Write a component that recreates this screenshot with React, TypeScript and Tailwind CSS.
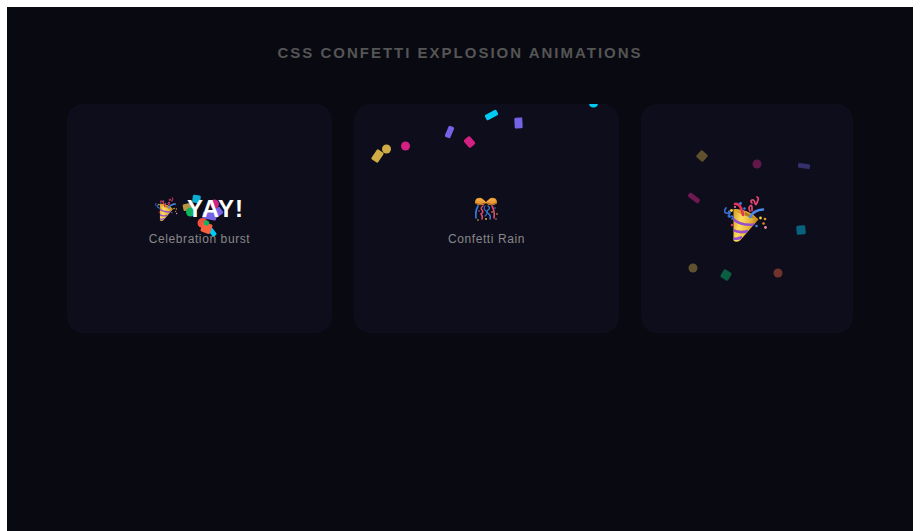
type Piece = {
  x: number;
  y: number;
  w: number;
  h: number;
  rotate?: number;
  round?: boolean;
  color: string;
};

const GOLD = '#d1ab45';
const PINK = '#d42083';
const PURPLE = '#7563e6';
const CYAN = '#00cbf5';
const GREEN = '#12b35f';
const ORANGE = '#fb603c';

// x / y are the centre of every piece, in card units
const burst: Piece[] = [
  { x: 129, y: 95, w: 8, h: 8, rotate: 8, color: '#0bafd4' },
  { x: 120, y: 103, w: 9, h: 7, rotate: -12, color: '#b5963f' },
  { x: 123, y: 108, w: 9, h: 9, round: true, color: GREEN },
  { x: 147, y: 100, w: 9, h: 9, round: true, color: PINK },
  { x: 149, y: 109, w: 12, h: 8, rotate: -35, color: PURPLE },
  { x: 142, y: 112, w: 14, h: 7, rotate: 10, color: PURPLE },
  { x: 144, y: 127, w: 12, h: 5, rotate: 52, color: CYAN },
  { x: 135, y: 119, w: 10, h: 10, round: true, color: '#f0503f' },
  { x: 139, y: 124, w: 10, h: 10, rotate: 20, color: ORANGE },
  { x: 139, y: 119, w: 5, h: 5, rotate: 25, color: GREEN },
];

const rain: Piece[] = [
  { x: 23, y: 52, w: 12, h: 8, rotate: -56, color: GOLD },
  { x: 32, y: 45, w: 9, h: 9, round: true, color: GOLD },
  { x: 51, y: 42, w: 9, h: 9, round: true, color: PINK },
  { x: 95, y: 28, w: 12, h: 6, rotate: -67, color: PURPLE },
  { x: 115, y: 38, w: 10, h: 8, rotate: 49, color: PINK },
  { x: 137, y: 11, w: 13, h: 6, rotate: -28, color: CYAN },
  { x: 164, y: 19, w: 8, h: 11, rotate: -3, color: PURPLE },
  { x: 239, y: -1, w: 9, h: 9, round: true, color: CYAN },
];

const popper: Piece[] = [
  { x: 61, y: 52, w: 9, h: 9, rotate: 42, color: '#5f512d' },
  { x: 116, y: 60, w: 9, h: 9, round: true, color: '#611848' },
  { x: 163, y: 62, w: 12, h: 5, rotate: 8, color: '#35306b' },
  { x: 53, y: 94, w: 13, h: 5, rotate: 38, color: '#6e1950' },
  { x: 160, y: 126, w: 9, h: 9, rotate: -5, color: '#08627f' },
  { x: 52, y: 164, w: 9, h: 9, round: true, color: '#5f512d' },
  { x: 85, y: 171, w: 9, h: 9, rotate: 32, color: '#0a5f43' },
  { x: 137, y: 169, w: 9, h: 9, round: true, color: '#71332c' },
];

function Confetti({ pieces, width }: { pieces: Piece[]; width: number }) {
  return (
    <svg
      aria-hidden="true"
      viewBox={`0 0 ${width} 229`}
      className="absolute inset-0 h-full w-full"
    >
      {pieces.map((p, i) => (
        <rect
          key={i}
          x={p.x - p.w / 2}
          y={p.y - p.h / 2}
          width={p.w}
          height={p.h}
          rx={p.round ? p.w / 2 : 1.5}
          fill={p.color}
          transform={`rotate(${p.rotate ?? 0} ${p.x} ${p.y})`}
        />
      ))}
    </svg>
  );
}

function PartyPopper({ className }: { className: string }) {
  return (
    <svg aria-hidden="true" viewBox="1 0 46 46" className={className}>
      <defs>
        <linearGradient id="cone" x1="0" x2="1" y1="0" y2="0.3">
          <stop offset="0" stopColor="#d99a22" />
          <stop offset="0.35" stopColor="#fbdc60" />
          <stop offset="0.7" stopColor="#eab93c" />
          <stop offset="1" stopColor="#b97c1c" />
        </linearGradient>
        <clipPath id="coneClip">
          <path d="M10.500 13Q24 12 35.500 23.500L17 44.500Q13 47 10.500 44.500Z" />
        </clipPath>
      </defs>
      <path d="M10.500 13Q24 12 35.500 23.500L17 44.500Q13 47 10.500 44.500Z" fill="url(#cone)" />
      <g clipPath="url(#coneClip)" fill="none" stroke="#9650cb" strokeWidth="2.600">
        <path d="M9 22Q17 30 32 28.500" />
        <path d="M9 33Q15 38 25 35" />
        <path d="M9 42Q13 44 19 41" />
      </g>
      <path d="M11 13.500Q18 20 35 23.500Q28 14 11 13.500Z" fill="#dda02b" />
      <path d="M22 16Q28 19 33 22.500Q27 22 22 19Z" fill="#b3761d" />
      <g fill="none" strokeLinecap="round" strokeLinejoin="round">
        <path d="M12 8Q18 7 20 19" stroke="#e33356" strokeWidth="2.600" />
        <path d="M27 21Q31 14 40 13.500" stroke="#4989ec" strokeWidth="2.600" />
        <path d="M27 15Q25 12 27 10T29 12 29 14M29 7Q27 5 29 4T32 7T35 4Q36 2 34 1" stroke="#e44770" strokeWidth="1.700" />
        <path d="M3 12Q0 16 3 17T6 15Q8 16 6 19T9 20Q11 20 9 23" stroke="#386fd2" strokeWidth="1.700" />
      </g>
      <circle cx="17.500" cy="7.500" r="1.400" fill="#397ee8" />
      <circle cx="21.500" cy="12.500" r="1.300" fill="#397ee8" />
      <circle cx="33.500" cy="30" r="1.300" fill="#397ee8" />
      <circle cx="12" cy="11" r="1.100" fill="#f0769e" />
      <circle cx="9" cy="29" r="1.300" fill="#d53653" />
      <circle cx="8.500" cy="14.500" r="1.400" fill="#f6d936" />
      <circle cx="37.500" cy="22" r="1.400" fill="#f9d63e" />
      <circle cx="42" cy="23" r="1.300" fill="#e39c2c" />
      <circle cx="40.500" cy="27.500" r="1.300" fill="#df8a2a" />
      <circle cx="42.500" cy="31.500" r="1.400" fill="#ed86ac" />
    </svg>
  );
}

function ConfettiBall() {
  return (
    <svg aria-hidden="true" viewBox="1 0 24 24" className="h-6 w-6">
      <path d="M12 5C9 2 7 0 5 1 2 1 1 3 1 6 4 9 9 9 12 6Z" fill="#e99a35" />
      <path d="M12 5C15 2 17 0 19 1 22 1 23 3 23 6 20 9 15 9 12 6Z" fill="#e99a35" />
      <path d="M3 3Q8 2 11 5M21 3Q16 2 13 5" fill="none" stroke="#f8b552" strokeWidth="1" />
      <path d="M1 6Q6 9 11 6M23 6Q18 9 13 6" fill="none" stroke="#a45d24" strokeWidth="1" />
      <g fill="none" strokeLinecap="round">
        <path d="M4 9Q1 14 2 21" stroke="#3579e0" strokeWidth="1.700" />
        <path d="M18 9Q21 14 20 21" stroke="#e34d76" strokeWidth="1.600" />
        <path d="M9 9Q6 11 8 13T7 17Q9 19 8 22" stroke="#e04b70" strokeWidth="1.500" />
        <path d="M14 9Q17 11 14 13T15 17Q17 19 16 22" stroke="#3f73c8" strokeWidth="1.500" />
        <path d="M11 9Q9 12 12 14T11 19" stroke="#386ac2" strokeWidth="1.200" />
      </g>
      <circle cx="21" cy="11" r=".8" fill="#4485df" />
      <circle cx="18" cy="15" r=".8" fill="#efbe3c" />
      <circle cx="23" cy="17" r=".8" fill="#efbe3c" />
      <circle cx="5" cy="14" r=".8" fill="#e05076" />
      <circle cx="12" cy="22" r=".9" fill="#efbe3c" />
      <circle cx="4" cy="23" r=".8" fill="#efbe3c" />
      <circle cx="22" cy="22" r=".8" fill="#e26b8d" />
    </svg>
  );
}

const cardClass =
  'relative flex h-[229px] flex-col items-center justify-center overflow-hidden rounded-2xl bg-[#0e0d1b]';
const labelClass = 'relative mt-1 text-xs leading-4 tracking-wider text-[#888888]';

export default function App() {
  return (
    <div className="min-h-screen bg-white px-[7px] pt-[7px] font-['Liberation_Sans',Arial,sans-serif]">
      <main className="min-h-[calc(100vh-7px)] bg-[#090911] px-[60px] pt-[34px]">
        <h1 className="text-center text-[15px] leading-6 font-bold tracking-[2px] text-[#555555] uppercase">
          CSS Confetti Explosion Animations
        </h1>

        <div className="mt-[39px] grid grid-cols-[5fr_5fr_4fr] gap-[22px]">
          {/* Burst */}
          <section className={cardClass}>
            <Confetti pieces={burst} width={264} />
            <div className="relative flex h-9 items-center gap-2 text-2xl font-bold tracking-[1px] text-white">
              <PartyPopper className="h-6 w-6" />
              <span>YAY!</span>
            </div>
            <p className={labelClass}>Celebration burst</p>
          </section>

          {/* Rain */}
          <section className={cardClass}>
            <Confetti pieces={rain} width={264} />
            <div className="relative flex h-9 items-center">
              <ConfettiBall />
            </div>
            <p className={labelClass}>Confetti Rain</p>
          </section>

          {/* Popper */}
          <section className={cardClass}>
            <Confetti pieces={popper} width={212} />
            <PartyPopper className="relative h-[46px] w-[46px]" />
          </section>
        </div>
      </main>
    </div>
  );
}
